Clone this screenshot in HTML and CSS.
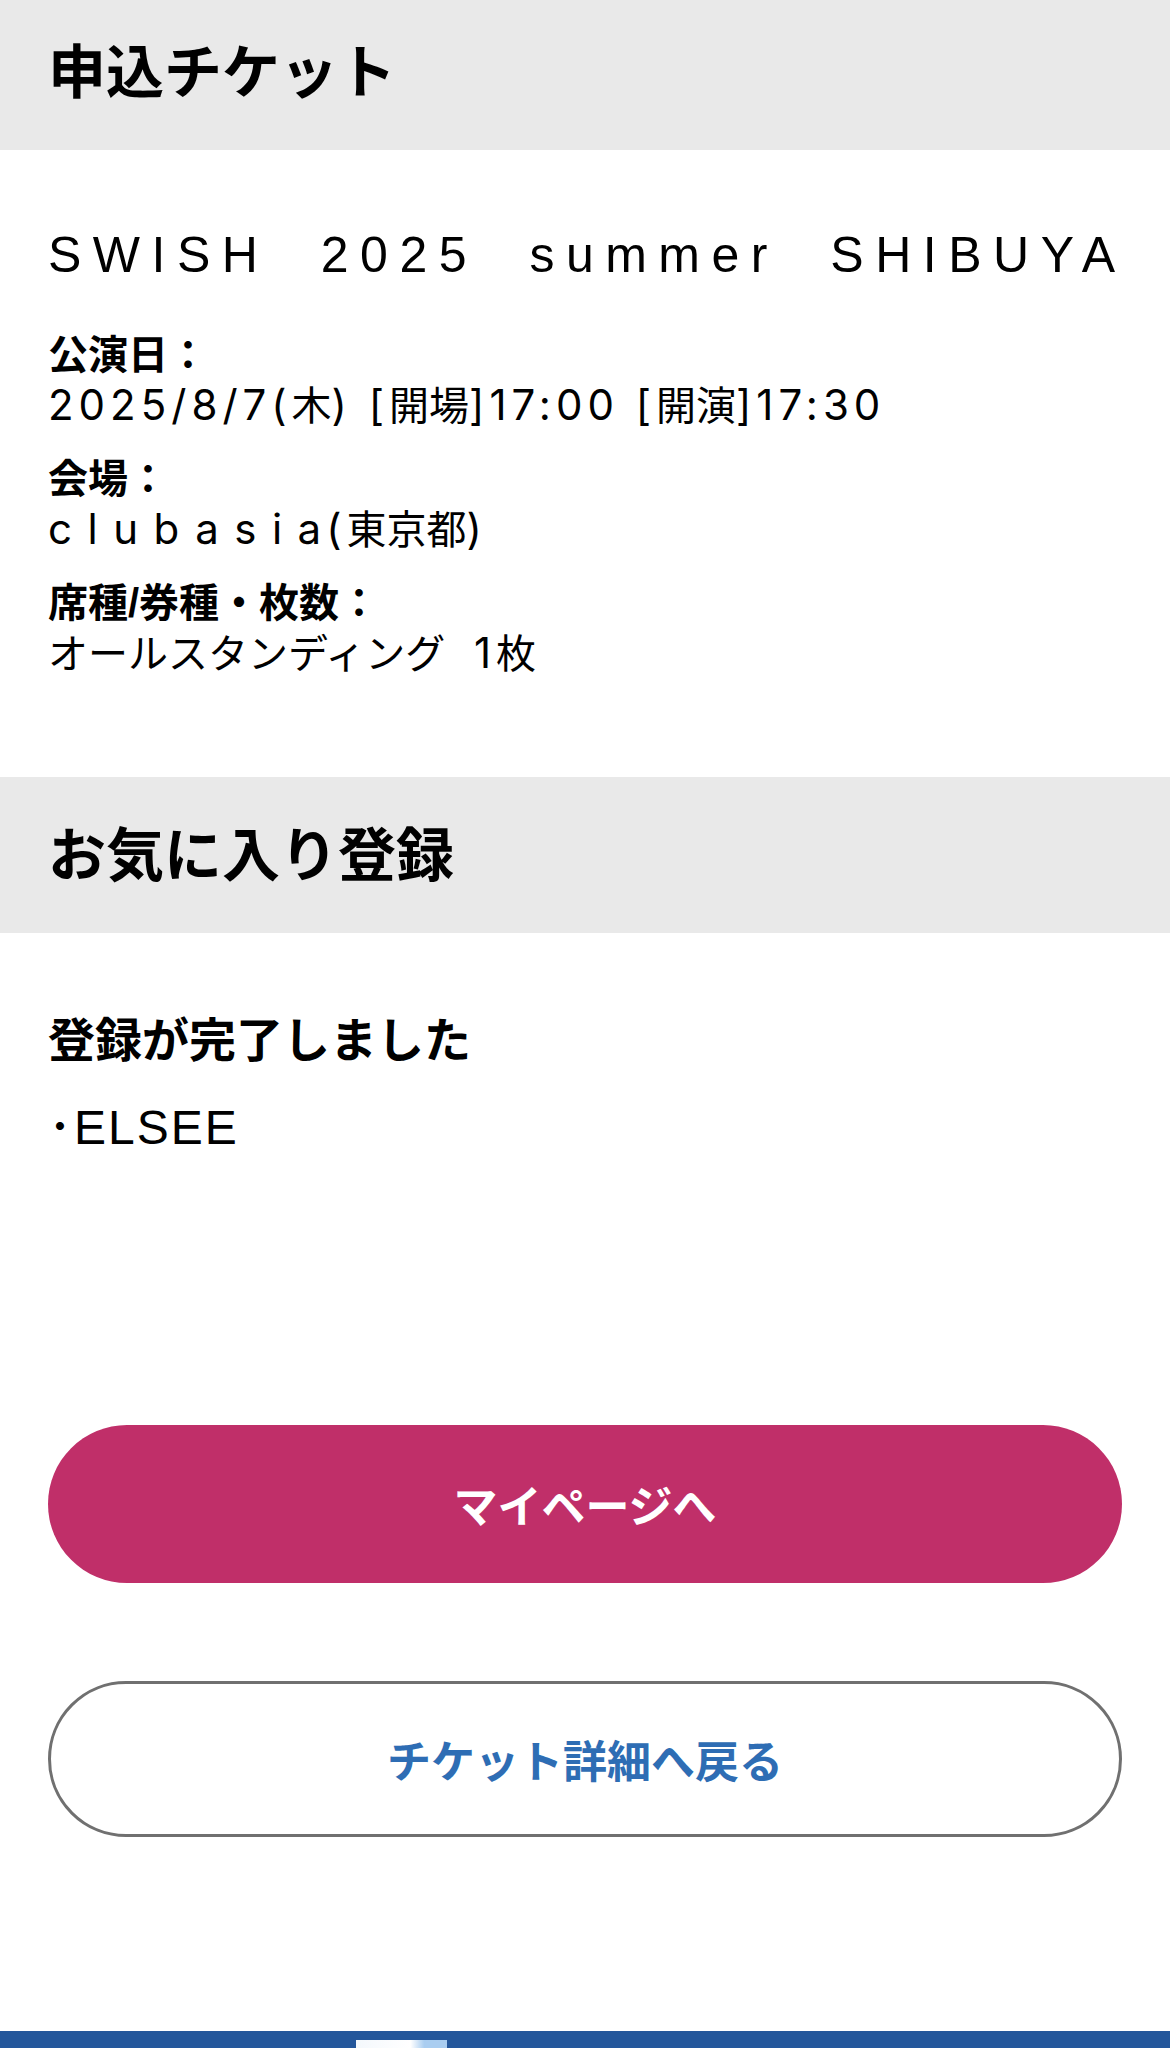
FILE: index.html
```html
<!DOCTYPE html>
<html lang="ja">
<head>
<meta charset="utf-8">
<title>お気に入り登録</title>
<link rel="stylesheet" href="styles.css">
</head>
<body>
<div class="page">
  <h2 class="band">申込チケット</h2>
  <section class="ticket">
    <p class="event-title">SWISH 2025 summer SHIBUYA</p>
    <dl class="info">
      <div class="info-item">
        <dt>公演日：</dt>
        <dd>2025/8/7(<span class="ja">木</span>) [<span class="ja">開場</span>]17:00 [<span class="ja">開演</span>]17:30</dd>
      </div>
      <div class="info-item">
        <dt>会場：</dt>
        <dd><span class="wide">clubasi</span>a(<span class="ja">東京都</span>)</dd>
      </div>
      <div class="info-item">
        <dt>席種/券種・枚数：</dt>
        <dd class="count"><span class="ja">オールスタンディング</span> 1<span class="ja">枚</span></dd>
      </div>
    </dl>
  </section>
  <h2 class="band">お気に入り登録</h2>
  <section class="fav">
    <p class="done">登録が完了しました</p>
    <p class="artist">･ELSEE</p>
    <div class="actions">
      <a class="btn btn-primary" href="#">マイページへ</a>
      <a class="btn btn-outline" href="#">チケット詳細へ戻る</a>
    </div>
  </section>
  <footer class="tabbar"><span class="tab-hint"></span></footer>
</div>
</body>
</html>
```

FILE: styles.css
```css
* {
  box-sizing: border-box;
  margin: 0;
  padding: 0;
}

html, body {
  background: #fff;
}

body {
  width: 1170px;
  font-family: "Liberation Sans", "Noto Sans CJK JP", sans-serif;
  color: #000;
  overflow: hidden;
}

.page {
  margin-top: -6px;
}

.band {
  height: 156px;
  display: flex;
  align-items: center;
  padding: 0 48px 8px;
  background: #e9e9e9;
  font-family: "Noto Sans CJK JP", sans-serif;
  font-size: 58px;
  font-weight: 700;
  line-height: 1;
}

.ticket {
  padding: 75px 48px 99px;
}

.event-title {
  font-size: 50px;
  line-height: 60px;
  letter-spacing: 11.5px;
  word-spacing: 26px;
  white-space: nowrap;
}

.info {
  margin-top: 45px;
  display: flex;
  flex-direction: column;
  gap: 24px;
}

.info dt {
  font-family: "Liberation Sans", "Noto Sans CJK JP", sans-serif;
  font-size: 40px;
  font-weight: 700;
  line-height: 50px;
  height: 50px;
}

.info dd {
  height: 50px;
  font-family: "Inter", "Noto Sans CJK JP", sans-serif;
  font-size: 42px;
  line-height: 50px;
  letter-spacing: 5px;
  white-space: nowrap;
}

.info dd .ja {
  font-family: "Noto Sans CJK JP", sans-serif;
  font-size: 40px;
  line-height: 1;
  letter-spacing: 0;
}

.info dd.count {
  word-spacing: 12px;
}

.wide {
  letter-spacing: 15.5px;
}

.fav {
  padding: 78px 48px 0;
}

.done {
  font-size: 47px;
  font-weight: 700;
  line-height: 60px;
}

.artist {
  margin-top: 27px;
  font-size: 48px;
  line-height: 60px;
  letter-spacing: 2px;
}

.actions {
  margin-top: 267px;
  display: flex;
  flex-direction: column;
  gap: 98px;
}

.btn {
  display: flex;
  align-items: center;
  justify-content: center;
  height: 158px;
  border-radius: 79px;
  font-family: "Noto Sans CJK JP", sans-serif;
  font-size: 44px;
  font-weight: 700;
  text-decoration: none;
}

.btn-primary {
  background: #c02f69;
  color: #fff;
}

.btn-outline {
  height: 156px;
  border: 3px solid #707070;
  background: #fff;
  color: #2e6db4;
}

.tabbar {
  display: block;
  margin-top: 194px;
  height: 60px;
  padding: 9px 0 0 356px;
  background: #24579b;
}

.tab-hint {
  display: block;
  width: 91px;
  height: 40px;
  background: linear-gradient(to right, #f4f8fc 0%, #ffffff 60%, #a9cdf0 75%, #a9cdf0 100%);
}
```
